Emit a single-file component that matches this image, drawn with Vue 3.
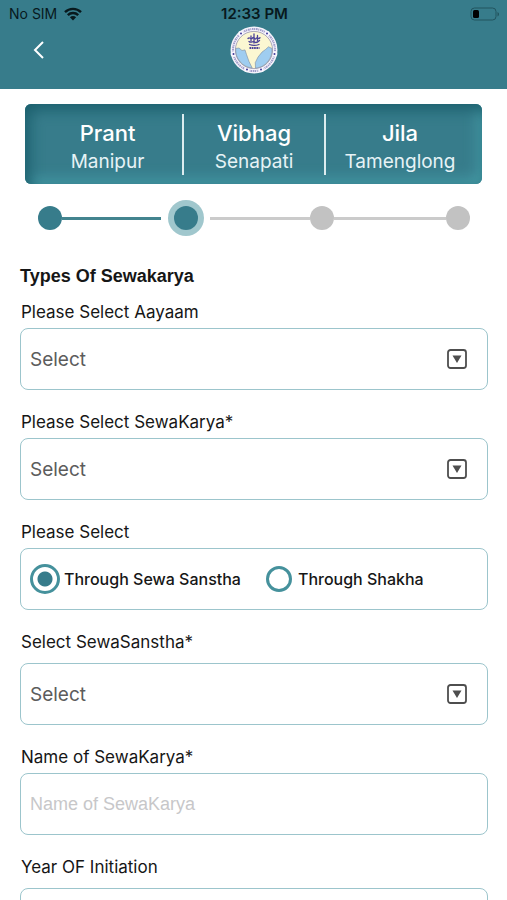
<script setup>
import { reactive } from 'vue'

const places = [
  { title: 'Prant', value: 'Manipur' },
  { title: 'Vibhag', value: 'Senapati' },
  { title: 'Jila', value: 'Tamenglong' },
]

const steps = ['done', 'current', 'todo', 'todo']

const form = reactive({
  aayaam: '',
  sewaKarya: '',
  through: 'sanstha',
  sewaSanstha: '',
  name: '',
  year: '',
})
</script>

<template>
  <div class="screen">
    <header class="header">
      <div class="status">
        <div class="carrier">
          <span>No SIM</span>
          <svg class="wifi" viewBox="0 0 18 14" aria-hidden="true">
            <path d="M1 5.2a11.4 11.4 0 0 1 16 0" />
            <path d="M3.8 8.1a7.4 7.4 0 0 1 10.4 0" />
            <path class="solid" d="M9 13.4 5.9 10.2a4.4 4.4 0 0 1 6.2 0Z" />
          </svg>
        </div>
        <span class="time">12:33 PM</span>
        <svg class="battery" viewBox="0 0 30 14" aria-hidden="true">
          <rect class="shell" x="1" y="1" width="25" height="12" rx="3.5" />
          <rect x="3" y="3" width="6" height="8" rx="1.5" />
          <path class="cap" d="M27.5 5v4.500c2-.8 2-3.700 0-4.500Z" />
        </svg>
      </div>
      <div class="bar">
        <button class="back" type="button" aria-label="Back">
          <svg viewBox="0 0 12 20" aria-hidden="true"><path d="M10 2 2 10l8 8" /></svg>
        </button>
        <svg class="logo" viewBox="0 0 48 48" role="img" aria-label="Emblem">
          <circle cx="24" cy="24" r="23.500" fill="#f5f3fb" />
          <circle cx="24" cy="24" r="21" fill="none" stroke="#5a53a0" stroke-width="2" stroke-dasharray="1.200 .7 1.800 .6 1 .8 1.500 .6" opacity=".55" />
          <g fill="#f8f6fd">
            <circle cx="11" cy="7.500" r="2.800" /><circle cx="37" cy="7.500" r="2.800" />
            <circle cx="3.500" cy="28" r="2.800" /><circle cx="44.500" cy="28" r="2.800" />
            <circle cx="17" cy="43.500" r="2.800" /><circle cx="31" cy="43.500" r="2.800" />
          </g>
          <g fill="#40399a">
            <circle cx="11" cy="7.500" r="1" /><circle cx="37" cy="7.500" r="1" />
            <circle cx="3.500" cy="28" r="1" /><circle cx="44.500" cy="28" r="1" />
            <circle cx="17" cy="43.500" r="1" /><circle cx="31" cy="43.500" r="1" />
          </g>
          <circle cx="24" cy="24" r="18.600" fill="#fbf7d2" stroke="#77749a" stroke-width=".6" />
          <path d="M5.700 22.500 9 22l3 2.500 3-.6 1.500 4.600 2.500 7 3.200 6.500A18.300 18.300 0 0 1 5.700 22.500Z" fill="#9fcdf0" stroke="#7c8ca0" stroke-width=".6" />
          <path d="M42 22.500l-3.500-1.700-3 2.700-3.500 2.600-4 5-2.700 5.500.2 5.600A18.300 18.300 0 0 0 42 22.500Z" fill="#9fcdf0" stroke="#7c8ca0" stroke-width=".6" />
          <g fill="none" stroke="#4b4399" stroke-width="1.300" stroke-linecap="round">
            <path d="M18 12.500c1.500-2 3 1.500 4.500-.5s2 2.500 3.500.5 2 1.500 4-.7" />
            <path d="M19 15.500c2 2 4-1 5.500.4s3 .5 5-1.400" />
            <path d="M24 8v9M21 10v5M27.500 9.500v5" />
            <path d="M19.500 18.500c3 1.200 6 1.200 9.500 0" />
          </g>
          <path d="M19.500 22h10" fill="none" stroke="#4b4399" stroke-width="2.200" stroke-dasharray="1.700 .6" />
        </svg>
      </div>
    </header>

    <main class="content">
      <dl class="places">
        <div v-for="place in places" :key="place.title" class="place">
          <dt>{{ place.title }}</dt>
          <dd>{{ place.value }}</dd>
        </div>
      </dl>

      <ol class="steps" aria-label="Progress">
        <li v-for="(state, i) in steps" :key="i" class="step" :class="state">
          <span class="dot"></span>
        </li>
      </ol>

      <form class="form" @submit.prevent>
        <h1>Types Of Sewakarya</h1>

        <div class="field">
          <label for="aayaam">Please Select Aayaam</label>
          <div class="box">
            <select id="aayaam" v-model="form.aayaam"><option value="">Select</option></select>
            <svg class="drop" viewBox="0 0 20 20" aria-hidden="true"><rect x="1" y="1" width="18" height="18" rx="2.500" /><path d="M5.500 6.500h9L10 14Z" /></svg>
          </div>
        </div>

        <div class="field">
          <label for="karya">Please Select SewaKarya*</label>
          <div class="box">
            <select id="karya" v-model="form.sewaKarya"><option value="">Select</option></select>
            <svg class="drop" viewBox="0 0 20 20" aria-hidden="true"><rect x="1" y="1" width="18" height="18" rx="2.500" /><path d="M5.500 6.500h9L10 14Z" /></svg>
          </div>
        </div>

        <fieldset class="field">
          <legend>Please Select</legend>
          <div class="box radios">
            <label><input v-model="form.through" type="radio" name="through" value="sanstha" />Through Sewa Sanstha</label>
            <label><input v-model="form.through" type="radio" name="through" value="shakha" />Through Shakha</label>
          </div>
        </fieldset>

        <div class="field loose">
          <label for="sanstha">Select SewaSanstha*</label>
          <div class="box">
            <select id="sanstha" v-model="form.sewaSanstha"><option value="">Select</option></select>
            <svg class="drop" viewBox="0 0 20 20" aria-hidden="true"><rect x="1" y="1" width="18" height="18" rx="2.500" /><path d="M5.500 6.500h9L10 14Z" /></svg>
          </div>
        </div>

        <div class="field">
          <label for="name">Name of SewaKarya*</label>
          <div class="box">
            <input id="name" v-model="form.name" type="text" placeholder="Name of SewaKarya" />
          </div>
        </div>

        <div class="field loose">
          <label for="year">Year OF Initiation</label>
          <div class="box">
            <input id="year" v-model="form.year" type="text" />
          </div>
        </div>
      </form>
    </main>
  </div>
</template>

<style>
body {
  margin: 0;
  background: #fff;
}
</style>

<style scoped>
* {
  box-sizing: border-box;
}

.screen {
  --teal: #377c8b;
  display: flex;
  flex-direction: column;
  height: 100vh;
  font-family: Inter, "Liberation Sans", sans-serif;
  color: #161616;
}

.header {
  flex: none;
  background: var(--teal);
  padding-bottom: 16px;
}

.status {
  display: grid;
  grid-template-columns: 1fr auto 1fr;
  align-items: center;
  height: 27px;
  padding: 0 7px 0 9px;
  font-size: 14px;
  line-height: 27px;
  color: #08191d;
}

.carrier {
  display: flex;
  align-items: center;
  gap: 7px;
}

.wifi {
  width: 18px;
  height: 14px;
  fill: none;
  stroke: #08191d;
  stroke-width: 2.4;
}

.wifi .solid {
  fill: #08191d;
  stroke: none;
}

.time {
  font-size: 15px;
  font-weight: 600;
}

.battery {
  justify-self: end;
  width: 30px;
  height: 14px;
}

.battery .shell {
  fill: none;
  stroke: #22545f;
}

.battery .cap {
  fill: #22545f;
}

.bar {
  display: grid;
  grid-template-columns: 1fr auto 1fr;
  grid-template-rows: 46px;
  align-items: center;
  padding: 0 24px;
}

.back {
  display: flex;
  justify-content: center;
  width: 30px;
  padding: 5px 0;
  border: 0;
  background: none;
}

.back svg {
  width: 12px;
  height: 20px;
  fill: none;
  stroke: #fff;
  stroke-width: 2;
}

.logo {
  width: 48px;
  height: 48px;
}

.content {
  flex: 1;
  min-height: 0;
  overflow-y: auto;
  scrollbar-width: none;
  padding-top: 15px;
}

.places {
  display: grid;
  grid-template-columns: 157px 1fr 158px;
  height: 80px;
  margin: 0 25px;
  padding: 10px 0;
  border-radius: 6px;
  background: var(--teal);
  box-shadow: inset 5px 6px 14px #1c5f6d, inset -4px -5px 14px #479da8;
  color: #fff;
  text-align: center;
}

.place + .place {
  border-left: 2px solid #dcecef;
}

.place:first-child {
  padding-left: 8px;
}

.place:last-child {
  padding-right: 8px;
}

.place dt {
  font-size: 22px;
  font-weight: 500;
  line-height: 30px;
  padding-top: 4px;
}

.place dd {
  margin: 0;
  font-size: 19px;
  line-height: 27px;
  color: #e6f3f6;
}

.steps {
  display: flex;
  margin: 22px 37px 0 38px;
  padding: 0;
  list-style: none;
}

.step {
  display: flex;
  align-items: center;
  flex: 1;
}

.step:last-child {
  flex: none;
}

.dot {
  width: 24px;
  height: 24px;
  border-radius: 50%;
  background: #c2c2c2;
}

.step:not(:last-child)::after {
  content: "";
  flex: 1;
  height: 3px;
  background: #cbcbcb;
}

.done .dot,
.current .dot {
  background: var(--teal);
}

.current .dot {
  box-shadow: 0 0 0 6px #a0c7cd;
}

.step.done::after {
  margin-right: 13px;
  background: #43848f;
}

.step.current::after {
  margin-left: 12px;
}

.form {
  padding: 34px 19px 20px 20px;
}

h1 {
  margin: 0 0 12px;
  font-family: "Liberation Sans", sans-serif;
  font-size: 18px;
  font-weight: 700;
  line-height: 24px;
}

.field {
  display: flex;
  flex-direction: column;
  gap: 4px;
  min-width: 0;
  margin: 0 0 20px;
  padding: 0;
  border: 0;
}

.field.loose {
  gap: 9px;
}

.field > label,
legend {
  padding: 0 0 0 1px;
  font-size: 17px;
  line-height: 24px;
}

legend {
  margin-bottom: 4px;
}

.box {
  display: flex;
  align-items: center;
  position: relative;
  height: 62px;
  border: 1px solid #9cc5cc;
  border-radius: 8px;
}

.box select,
.box input[type="text"] {
  flex: 1;
  min-width: 0;
  height: 100%;
  padding: 0 9px;
  border: 0;
  border-radius: 8px;
  outline: none;
  background: transparent;
  appearance: none;
}

.box select {
  font: 19px Inter, sans-serif;
  color: #5c5c5c;
}

.box input[type="text"] {
  font: 18px "Liberation Sans", sans-serif;
}

.box input::placeholder {
  color: #c7c7c9;
  opacity: 1;
}

.drop {
  position: absolute;
  right: 20px;
  width: 20px;
  height: 20px;
  pointer-events: none;
}

.drop rect {
  fill: none;
  stroke: #4e4e4e;
  stroke-width: 1.8;
}

.drop path {
  fill: #4e4e4e;
}

.radios {
  gap: 25px;
  padding: 0 9px;
}

.radios label {
  display: flex;
  align-items: center;
  gap: 4px;
  font-size: 16px;
  font-weight: 500;
  line-height: 22px;
}

.radios input {
  flex: none;
  width: 26px;
  height: 26px;
  margin: 0;
  border: 3px solid #45919c;
  border-radius: 50%;
  appearance: none;
}

.radios label + label {
  gap: 6px;
}

.radios input:checked {
  width: 30px;
  height: 30px;
  background: radial-gradient(circle, var(--teal) 7px, #fff 8px);
}
</style>
